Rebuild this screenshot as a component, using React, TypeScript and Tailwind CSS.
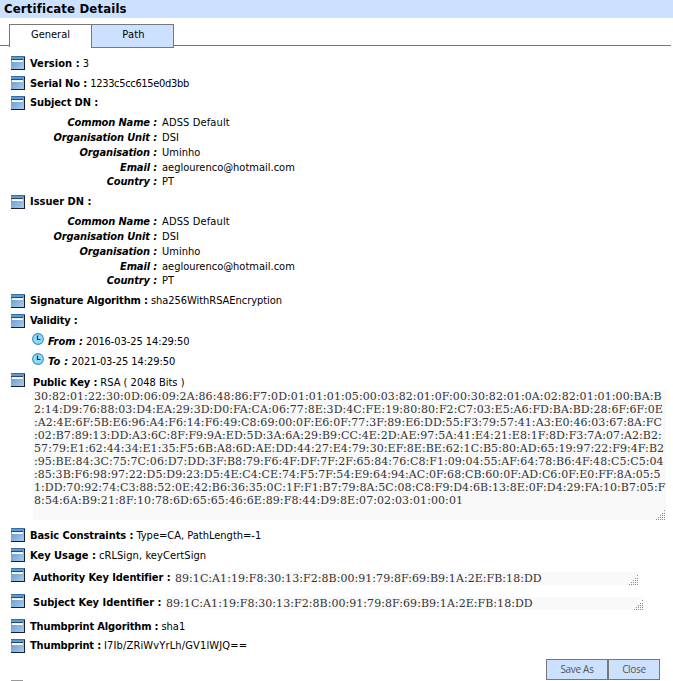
import React from "react";

const KEY_LINES: [string, string][] = [
  ["30:82:01:22:30:0D:06:09:2A:86:48:86:F7:0D:01:01:01:05:00:03:82:01:0F:00:30:82:01:0A:02:82:01:01:00:BA:B", "tracking-[0.09px]"],
  ["2:14:D9:76:88:03:D4:EA:29:3D:D0:FA:CA:06:77:8E:3D:4C:FE:19:80:80:F2:C7:03:E5:A6:FD:BA:BD:28:6F:6F:0E", "tracking-[0.065px]"],
  [":A2:4E:6F:5B:E6:96:A4:F6:14:F6:49:C8:69:00:0F:E6:0F:77:3F:89:E6:DD:55:F3:79:57:41:A3:E0:46:03:67:8A:FC", "tracking-[0.06px]"],
  [":02:B7:89:13:DD:A3:6C:8F:F9:9A:ED:5D:3A:6A:29:B9:CC:4E:2D:AE:97:5A:41:E4:21:E8:1F:8D:F3:7A:07:A2:B2:", "tracking-[0.07px]"],
  ["57:79:E1:62:44:34:E1:35:F5:6B:A8:6D:AE:DD:44:27:E4:79:30:EF:8E:BE:62:1C:B5:80:AD:65:19:97:22:F9:4F:B2", "tracking-[0.07px]"],
  [":95:BE:84:3C:75:7C:06:D7:DD:3F:B8:79:F6:4F:DF:7F:2F:65:84:76:C8:F1:09:04:55:AF:64:78:B6:4F:48:C5:C5:04", "tracking-[0.05px]"],
  [":85:3B:F6:98:97:22:D5:D9:23:D5:4E:C4:CE:74:F5:7F:54:E9:64:94:AC:0F:68:CB:60:0F:AD:C6:0F:E0:FF:8A:05:5", "tracking-[0.05px]"],
  ["1:DD:70:92:74:C3:88:52:0E:42:B6:36:35:0C:1F:F1:B7:79:8A:5C:08:C8:F9:D4:6B:13:8E:0F:D4:29:FA:10:B7:05:F", "tracking-[0.06px]"],
  ["8:54:6A:B9:21:8F:10:78:6D:65:65:46:6E:89:F8:44:D9:8E:07:02:03:01:00:01", "tracking-[0.09px]"],
];
const KEY_ID = "89:1C:A1:19:F8:30:13:F2:8B:00:91:79:8F:69:B9:1A:2E:FB:18:DD";
const DN: [string, string, string][] = [
  ["Common Name :", "ADSS Default", "tracking-[0.13px]"],
  ["Organisation Unit :", "DSI", "tracking-[0.1px]"],
  ["Organisation :", "Uminho", ""],
  ["Email :", "aeglourenco@hotmail.com", ""],
  ["Country :", "PT", ""],
];

function WindowIcon({ className = "" }: { className?: string }) {
  return (
    <svg className={`block h-[14px] w-[14px] shrink-0 ${className}`} viewBox="0 0 14 14" shapeRendering="crispEdges">
      <defs>
        <linearGradient id="pane" x1="0" y1="0" x2="1" y2="1">
          <stop offset="0" stopColor="#5b93c8" />
          <stop offset="1" stopColor="#a9cbee" />
        </linearGradient>
      </defs>
      <rect width="14" height="14" fill="#16202f" />
      <rect width="13" height="13" fill="url(#pane)" />
      <rect width="14" height="1" fill="#3a6ea3" />
      <rect y="1" width="13" height="2" fill="#5a9bd3" />
      <rect y="3" width="12" height="1" fill="#2b4a6b" />
      <rect x="1" y="4" width="11" height="1" fill="#e9eef3" />
      <rect x="1" y="5" width="11" height="1" fill="#ffffff" />
    </svg>
  );
}

function ClockIcon() {
  return (
    <svg className="mb-1 block h-3 w-3 shrink-0" viewBox="0 0 12 12">
      <circle cx="6" cy="6" r="5.4" fill="#8bdcfb" stroke="#3f8fb5" strokeWidth="1.1" />
      <path d="M5.5 2.5v4h3" fill="none" stroke="#17374c" strokeWidth="1.2" />
    </svg>
  );
}

function Grip() {
  return (
    <svg className="block h-[10px] w-[10px] shrink-0" viewBox="0 0 10 10" shapeRendering="crispEdges">
      {[[8, 0], [6, 3], [8, 3], [4, 5], [6, 5], [8, 5], [2, 7], [4, 7], [6, 7], [8, 7], [0, 9], [2, 9], [4, 9], [6, 9], [8, 9]].map(([x, y]) => (
        <rect key={`${x}-${y}`} x={x} y={y} width="1" height="1" fill="#8c8c8c" />
      ))}
    </svg>
  );
}

function Row({ label, value, h = "h-5", lt = "", vt = "" }: { label: string; value?: string; h?: string; lt?: string; vt?: string }) {
  return (
    <div className={`flex items-center pl-[11px] ${h}`}>
      <WindowIcon />
      <b className={`ml-[5px] ${lt}`}>{label}</b>
      {value && <span className={`ml-[3px] ${vt}`}>{value}</span>}
    </div>
  );
}

function Names() {
  return (
    <div className="mt-[3px] mb-[3px] h-[74px] leading-[15px]">
      {DN.map(([k, v, tracking]) => (
        <div key={k} className="flex last:leading-[14px]">
          <b className="w-[157px] text-right tracking-[-0.14px] italic">{k}</b>
          <span className={`ml-[5px] ${tracking}`}>{v}</span>
        </div>
      ))}
    </div>
  );
}

function Moment({ label, value, lt = "" }: { label: string; value: string; lt?: string }) {
  return (
    <div className="flex h-5 items-center pl-8">
      <ClockIcon />
      <b className={`ml-1 italic ${lt}`}>{label}</b>
      <span className="ml-[3px] tracking-[-0.08px]">{value}</span>
    </div>
  );
}

export default function App() {
  return (
    <div className="h-[681px] w-[673px] overflow-hidden whitespace-pre bg-white font-['DejaVu_Sans_Condensed','DejaVu_Sans',sans-serif] text-[11px] leading-[15px] text-black [font-stretch:condensed]">
      <h1 className="h-[18px] bg-[#cce0ff] pl-1 text-[13px] leading-[18px] font-bold tracking-[0.17px]">Certificate Details</h1>
      <div className="mt-[6px] mb-[6px] flex h-[23px] text-center leading-[19px]">
        <div className="h-[22px] w-[9px] border-b border-[#777]" />
        <div className="w-[82px] border-t border-l border-[#777]">General</div>
        <div className="h-6 w-[83px] border border-[#777] bg-[#cce0ff] pl-[2px] tracking-[0.2px]">Path</div>
        <div className="h-[22px] w-[497px] border-b border-[#777]" />
      </div>
      <Row label="Version :" value="3" lt="tracking-[0.06px]" />
      <Row label="Serial No :" value="1233c5cc615e0d3bb" lt="tracking-[-0.08px]" vt="tracking-[-0.33px]" />
      <Row label="Subject DN :" h="h-[19px]" lt="tracking-[-0.1px]" />
      <Names />
      <Row label="Issuer DN :" h="h-[19px]" />
      <Names />
      <Row label="Signature Algorithm :" value="sha256WithRSAEncryption" h="h-[19px]" lt="tracking-[-0.14px]" vt="tracking-[-0.04px]" />
      <Row label="Validity :" h="h-[21px]" lt="tracking-[-0.2px]" />
      <Moment label="From :" value="2016-03-25 14:29:50" />
      <Moment label="To :" value="2021-03-25 14:29:50" lt="tracking-[0.25px]" />
      <div className="flex h-[19px] pl-[11px]">
        <WindowIcon className="mt-[2px]" />
        <b className="mt-[4px] ml-2 tracking-[-0.1px]">Public Key :</b>
        <span className="mt-[4px] ml-[3px]">RSA ( 2048 Bits )</span>
      </div>
      <div className="ml-[33px] flex h-[130px] w-[633px] items-end bg-[#f9f9f9]">
        <div className="h-[130px] w-[623px] pl-[1px] font-['DejaVu_Serif',serif] text-[11px] leading-[13px] text-[#333] [font-stretch:normal]">
          {KEY_LINES.map(([line, tracking]) => (
            <div key={line} className={tracking}>{line}</div>
          ))}
        </div>
        <Grip />
      </div>
      <div className="h-[5px]" />
      <Row label="Basic Constraints :" value="Type=CA, PathLength=-1" lt="tracking-[-0.06px]" />
      <Row label="Key Usage :" value="cRLSign, keyCertSign" vt="tracking-[0.09px]" />
      <div className="flex h-[26px] pl-[11px]">
        <WindowIcon className="mt-[3px]" />
        <b className="mt-[5px] ml-2 tracking-[-0.08px]">Authority Key Identifier :</b>
        <div className="mt-[7px] ml-auto mr-[34px] flex h-[13px] w-[465px] items-end justify-between bg-[#f9f9f9] pl-[1px] font-['DejaVu_Serif',serif] leading-[13px] text-[#333] [font-stretch:normal]">
          <span className="tracking-[0.05px]">{KEY_ID}</span>
          <Grip />
        </div>
      </div>
      <div className="flex h-[25px] pl-[11px]">
        <WindowIcon className="mt-[3px]" />
        <b className="mt-[4px] ml-2">Subject Key Identifier :</b>
        <div className="mt-[6px] ml-auto mr-[29px] flex h-[13px] w-[479px] items-end justify-between bg-[#f9f9f9] pl-[1px] font-['DejaVu_Serif',serif] leading-[13px] text-[#333] [font-stretch:normal]">
          <span className="tracking-[0.05px]">{KEY_ID}</span>
          <Grip />
        </div>
      </div>
      <Row label="Thumbprint Algorithm :" value="sha1" lt="tracking-[-0.14px]" />
      <Row label="Thumbprint :" value="I7Ib/ZRiWvYrLh/GV1lWJQ==" h="h-[19px]" lt="tracking-[-0.15px]" vt="tracking-[0.15px]" />
      <div className="mt-1 flex h-[21px] justify-end pr-[13px] font-['Open_Sans',sans-serif] text-[10px] leading-[19px] text-[#555] [font-stretch:normal]">
        <button className="w-[62px] border border-[#777] bg-[#cce0ff] tracking-[-0.3px]">Save As</button>
        <button className="w-[52px] border border-[#777] bg-[#cce0ff] tracking-[-0.3px]">Close</button>
      </div>
      <div className="ml-[11px] h-px w-3 bg-[#999]" />
    </div>
  );
}
